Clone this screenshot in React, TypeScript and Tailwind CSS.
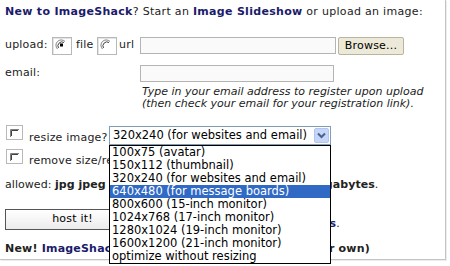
import React from 'react';

const options = [
  '100x75 (avatar)',
  '150x112 (thumbnail)',
  '320x240 (for websites and email)',
  '640x480 (for message boards)',
  '800x600 (15-inch monitor)',
  '1024x768 (17-inch monitor)',
  '1280x1024 (19-inch monitor)',
  '1600x1200 (21-inch monitor)',
  'optimize without resizing',
];

function RadioBox({ checked }: { checked?: boolean }) {
  return (
    <span className="inline-block w-[20px] h-[18px] border border-[#b8b8b8] bg-white shadow-[inset_1px_1px_0_#e4e4e4]">
      <svg width="18" height="16" viewBox="0 0 18 16" className="block">
        <path d="M4.5 11 A5 5 0 0 1 12 3.5" fill="none" stroke="#808080" strokeWidth="1" />
        <path d="M5.5 10 A4 4 0 0 1 11 4.5" fill="none" stroke="#404040" strokeWidth="1" />
        {checked && <rect x="7" y="5.5" width="3" height="3" fill="#000" />}
      </svg>
    </span>
  );
}

function CheckBox() {
  return (
    <span className="inline-block w-[17px] h-[15px] border border-[#b8b8b8] bg-white">
      <svg width="15" height="13" viewBox="0 0 15 13" className="block">
        <path d="M3.5 11 V3.5 H12" fill="none" stroke="#808080" strokeWidth="1" />
        <path d="M4.5 10 V4.5 H11" fill="none" stroke="#404040" strokeWidth="1" />
      </svg>
    </span>
  );
}

export default function App() {
  return (
    <div className="w-[450px] h-[266px] overflow-hidden bg-white relative text-[11px] text-[#222] font-['DejaVu_Sans',sans-serif]">
      <div className="w-[446px] h-[260px] border-r border-b border-[#c4c4c4] shadow-[1px_1px_0_#ececec] pl-[5px] pt-[5px]">
        {/* Title */}
        <p className="leading-[14px] whitespace-nowrap tracking-[0.3px]">
          <b className="text-[#1b1b6b]">New to ImageShack</b>? Start an{' '}
          <b className="text-[#1b1b6b]">Image Slideshow</b> or upload an image:
        </p>

        {/* Upload row */}
        <div className="flex items-center mt-[17px] h-[19px] tracking-[0.2px]">
          <span className="w-[47px]">upload:</span>
          <RadioBox checked />
          <span className="ml-[4px] w-[21px]">file</span>
          <RadioBox />
          <span className="ml-[2px] w-[21px]">url</span>
          <span className="w-[196px] h-[17px] border border-[#b4b4b4] bg-[#fafafa]" />
          <button className="ml-[2px] w-[66px] h-[18px] border border-[#b8b4a0] rounded-[2px] bg-[#ece9d8] text-[11px] text-black leading-none font-['DejaVu_Sans',sans-serif]">
            Browse...
          </button>
        </div>

        {/* Email row */}
        <div className="flex items-center mt-[10px] h-[17px] tracking-[0.2px]">
          <span className="w-[135px]">email:</span>
          <span className="w-[194px] h-[17px] border border-[#b4b4b4] bg-[#fafafa]" />
        </div>

        <p className="mt-[4px] pl-[137px] italic text-[11px] leading-[12px] text-[#222] whitespace-nowrap">
          Type in your email address to register upon upload
          <br />
          (then check your email for your registration link).
        </p>

        {/* Resize row */}
        <div className="flex items-center mt-[16px] h-[19px] tracking-[0.2px]">
          <span className="ml-[1px]"><CheckBox /></span>
          <span className="ml-[6px] mt-[6px] w-[80px]">resize image?</span>
          <div className="relative w-[222px] h-[19px] border border-[#7f9db9] bg-white flex items-center">
            <span className="pl-[3px] text-[11.5px] tracking-normal text-black whitespace-nowrap leading-none">
              320x240 (for websites and email)
            </span>
            <span className="absolute right-[1px] top-[1px] w-[15px] h-[15px] rounded-[2px] border border-[#b3c5ef] bg-[#c6d5fa] flex items-center justify-center">
              <svg width="9" height="7" viewBox="0 0 9 7">
                <path d="M1 1.5 L4.5 5 L8 1.5" fill="none" stroke="#4d6185" strokeWidth="2" />
              </svg>
            </span>
          </div>
        </div>

        {/* Remove row */}
        <div className="flex items-center mt-[7px] h-[15px] tracking-[0.2px]">
          <span className="ml-[1px]"><CheckBox /></span>
          <span className="ml-[6px] mt-[4px] whitespace-nowrap">remove size/resolution bar from thumbnail</span>
        </div>

        {/* Allowed */}
        <p className="mt-[11px] leading-[14px] whitespace-nowrap tracking-[0.05px]">
          allowed: <b>jpg jpeg png gif bmp tif tiff swf</b> max <b>1.5 megabytes</b>.
        </p>

        {/* Host it */}
        <div className="flex items-end mt-[17px] h-[21px] tracking-[0.2px]">
          <button className="w-[135px] h-[21px] border border-[#555] bg-gradient-to-b from-white to-[#ececec] text-[11px] text-black font-['DejaVu_Sans',sans-serif]">
            host it!
          </button>
          <span className="ml-[5px] w-[195px] text-right whitespace-nowrap leading-[12px]">
            agree to the <b className="text-[#1b1b6b]">terms of services</b>.
          </span>
        </div>

        <p className="mt-[12px] w-[365px] flex justify-between leading-[14px] whitespace-nowrap font-bold tracking-[0.2px]">
          <span>
            New! <span className="text-[#1b1b6b]">ImageShack Uploader</span> for sites
          </span>
          <span>(or your own)</span>
        </p>
      </div>
      <p className="pl-[40px] mt-[5px] leading-[14px] text-[#444] whitespace-nowrap">provide links for your own website</p>

      {/* Open dropdown list */}
      <ul className="absolute left-[109px] top-[145px] w-[222px] border border-black bg-white text-[11.5px] text-black">
        {options.map((o, i) => (
          <li
            key={o}
            className={
              i === 3
                ? 'h-[13px] leading-[13px] pl-[2px] whitespace-nowrap bg-[#316ac5] text-white'
                : 'h-[13px] leading-[13px] pl-[2px] whitespace-nowrap'
            }
          >
            {o}
          </li>
        ))}
      </ul>
    </div>
  );
}
